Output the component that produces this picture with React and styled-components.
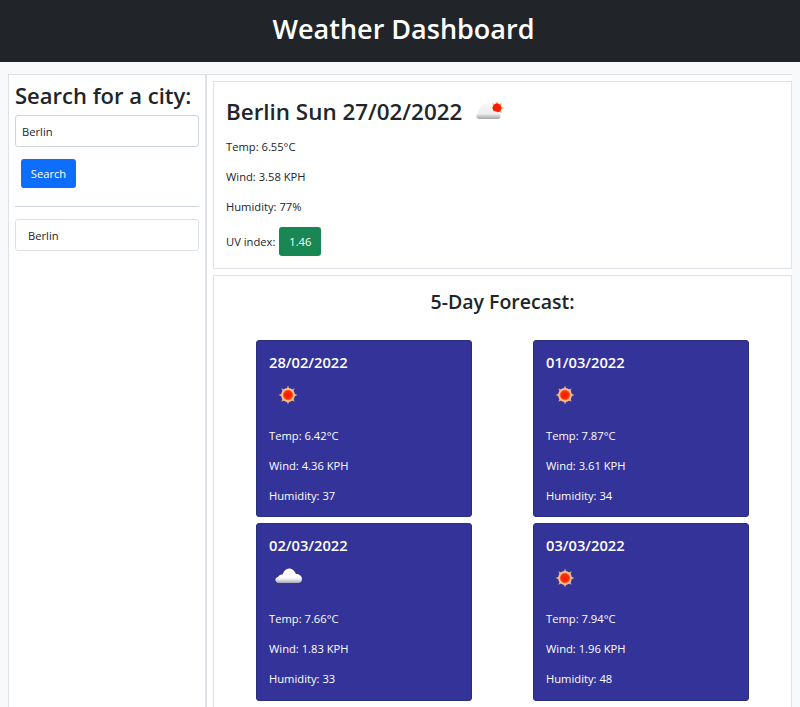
import styled, { createGlobalStyle } from "styled-components";

const GlobalStyle = createGlobalStyle`
  html, body {
    margin: 0;
    padding: 0;
    background: #fff;
    color: #212529;
    font-family: "Open Sans", "Noto Sans", sans-serif;
    font-size: 12px;
  }
  * { box-sizing: border-box; }
`;

const TopBar = styled.header`
  height: 62px;
  padding: 0 0 6px 7px;
  background: #212529;
  color: #fff;
  display: flex;
  align-items: center;
  justify-content: center;
`;

const PageTitle = styled.h1`
  margin: 0;
  font-size: 27px;
  font-weight: 600;
`;

const Layout = styled.div`
  background: #f8f9fa;
  padding: 12px 8px 0;
  display: grid;
  grid-template-columns: 198px 1fr;
  height: 645px;
  overflow: hidden;
`;

const Sidebar = styled.aside`
  background: #fff;
  border: 1px solid #dee2e6;
  border-bottom: 0;
  padding: 6px 6px;
`;

const SideTitle = styled.h2`
  margin: 0 0 6px;
  font-size: 22px;
  line-height: 28px;
  font-weight: 600;
  white-space: nowrap;
`;

const CityInput = styled.input`
  display: block;
  width: 100%;
  height: 32px;
  padding: 0 6px;
  border: 1px solid #ced4da;
  border-radius: 3px;
  color: #212529;
  font: inherit;
  font-size: 11.2px;
`;

const SearchButton = styled.button`
  display: block;
  margin: 12px 0 0 6px;
  width: 55px;
  height: 29px;
  padding: 0;
  border: 0;
  border-radius: 3px;
  background: #0d6efd;
  color: #fff;
  font: inherit;
  font-size: 11.2px;
`;

const Divider = styled.hr`
  margin: 18px 0 12px;
  border: 0;
  border-top: 1px solid #ced4da;
`;

const HistoryItem = styled.div`
  height: 32px;
  padding: 0 12px;
  display: flex;
  align-items: center;
  border: 1px solid #dee2e6;
  border-radius: 3px;
  font-size: 11.2px;
`;

const Main = styled.main`
  background: #fff;
  border: 1px solid #dee2e6;
  border-bottom: 0;
  border-right: 0;
  padding: 6px 0 0 6px;
  display: flex;
  flex-direction: column;
  gap: 6px;
`;

const Panel = styled.section`
  background: #fff;
  border: 1px solid #dee2e6;
  width: 579px;
`;

const TodayPanel = styled(Panel)`
  height: 188px;
  padding: 12px 12px 0;
`;

const CityRow = styled.div`
  display: flex;
  align-items: center;
  height: 34px;
  gap: 8px;
`;

const CityTitle = styled.h2`
  margin: 0;
  font-size: 22.4px;
  font-weight: 600;
  white-space: nowrap;
`;

const Stat = styled.p`
  margin: ${({ $first }) => ($first ? "10px" : "0")} 0 0;
  height: 30px;
  line-height: 18px;
  font-size: 11.2px;
`;

const UvRow = styled.div`
  display: flex;
  align-items: center;
  gap: 4px;
  font-size: 11.2px;
  margin-top: -1px;
`;

const UvBadge = styled.span`
  width: 42px;
  height: 29px;
  display: flex;
  align-items: center;
  justify-content: center;
  border-radius: 3px;
  background: #198754;
  color: #fff;
`;

const ForecastPanel = styled(Panel)`
  flex: 1;
  border-bottom: 0;
  padding-top: 12px;
`;

const ForecastTitle = styled.h3`
  margin: 0 0 24px;
  height: 28px;
  line-height: 28px;
  font-size: 19.5px;
  font-weight: 600;
  text-align: center;
`;

const ForecastGrid = styled.div`
  display: grid;
  grid-template-columns: 277px 277px;
  justify-content: center;
  row-gap: 6px;
`;

const DayCard = styled.article`
  justify-self: center;
  width: 216px;
  height: 177.4px;
  padding: 12px 12px 0;
  border: 1px solid #2a2f7d;
  border-radius: 3px;
  background: #333399;
  color: #fff;
`;

const DayDate = styled.h4`
  margin: 0;
  height: 20px;
  line-height: 18px;
  font-size: 14.7px;
  font-weight: 600;
`;

const IconSlot = styled.div`
  height: 40px;
  margin-top: 2px;
  display: flex;
  align-items: center;
`;

const DayStat = styled.p`
  margin: ${({ $first }) => ($first ? "12px" : "0")} 0 0;
  height: 30px;
  line-height: 18px;
  font-size: 11.2px;
`;

const Sun = () => {
  const rays = [0, 45, 90, 135, 180, 225, 270, 315];
  return (
    <svg width="40" height="40" viewBox="0 0 40 40">
      <defs>
        <radialGradient id="sunCore">
          <stop offset="0%" stopColor="#ff1c00" />
          <stop offset="70%" stopColor="#fb2a06" />
          <stop offset="100%" stopColor="#f8914a" />
        </radialGradient>
      </defs>
      {rays.map((r) => (
        <polygon key={r} points="17.6,14 20.4,14 19,10.5" fill="#e9a878" transform={`rotate(${r} 19 20)`} />
      ))}
      <circle cx="19" cy="20" r="6.9" fill="#f6c39c" />
      <circle cx="19" cy="20" r="5.4" fill="url(#sunCore)" />
    </svg>
  );
};

const Cloud = () => (
  <svg width="40" height="40" viewBox="0 0 40 40">
    <defs>
      <linearGradient id="cloudFill" x1="0" y1="0" x2="0" y2="1">
        <stop offset="0%" stopColor="#ffffff" />
        <stop offset="65%" stopColor="#ffffff" />
        <stop offset="100%" stopColor="#a9a9b8" />
      </linearGradient>
    </defs>
    <path
      d="M10 25 C6 25 5 20 9 19 C10 17 12 16.5 13.5 16.5 C15 12 18 10 21 10.5 C24 11 26 13.5 27 16 C30 16 33 18 33 21 C33 24 31 25 29 25 Z"
      fill="url(#cloudFill)"
    />
  </svg>
);

const CloudSun = () => (
  <svg width="40" height="40" viewBox="0 0 40 40">
    <defs>
      <linearGradient id="fewFill" x1="0" y1="0" x2="0" y2="1">
        <stop offset="0%" stopColor="#f6f6f6" />
        <stop offset="65%" stopColor="#efefef" />
        <stop offset="100%" stopColor="#a5a5a5" />
      </linearGradient>
    </defs>
    {[0, 45, 90, 135, 180, 225, 270, 315].map((r) => (
      <polygon key={r} points="25.6,13.5 28.4,13.5 27,10" fill="#f7a15c" transform={`rotate(${r} 27 17)`} />
    ))}
    <circle cx="27" cy="17" r="4.4" fill="#f61f00" />
    <path
      d="M9.5 28 C6 28 5 24 8 22.5 C9 17 12.5 12.5 16.5 12.5 C20 12.5 22 16 23.5 20 C26 20 28 21 29 22.5 C31.5 23.5 31 28 28 28 Z"
      fill="url(#fewFill)"
    />
  </svg>
);

const today = ["Temp: 6.55°C", "Wind: 3.58 KPH", "Humidity: 77%"];

const days = [
  { date: "28/02/2022", icon: "sun", temp: "6.42", wind: "4.36", hum: 37 },
  { date: "01/03/2022", icon: "sun", temp: "7.87", wind: "3.61", hum: 34 },
  { date: "02/03/2022", icon: "cloud", temp: "7.66", wind: "1.83", hum: 33 },
  { date: "03/03/2022", icon: "sun", temp: "7.94", wind: "1.96", hum: 48 },
];

export default function App() {
  return (
    <>
      <GlobalStyle />
      <TopBar>
        <PageTitle>Weather Dashboard</PageTitle>
      </TopBar>
      <Layout>
        <Sidebar>
          <SideTitle>Search for a city:</SideTitle>
          <CityInput defaultValue="Berlin" />
          <SearchButton>Search</SearchButton>
          <Divider />
          <HistoryItem>Berlin</HistoryItem>
        </Sidebar>
        <Main>
          <TodayPanel>
            <CityRow>
              <CityTitle>Berlin Sun 27/02/2022</CityTitle>
              <CloudSun />
            </CityRow>
            {today.map((t, i) => (
              <Stat key={t} $first={i === 0}>{t}</Stat>
            ))}
            <UvRow>
              UV index: <UvBadge>1.46</UvBadge>
            </UvRow>
          </TodayPanel>
          <ForecastPanel>
            <ForecastTitle>5-Day Forecast:</ForecastTitle>
            <ForecastGrid>
              {days.map((d) => (
                <DayCard key={d.date}>
                  <DayDate>{d.date}</DayDate>
                  <IconSlot>{d.icon === "sun" ? <Sun /> : <Cloud />}</IconSlot>
                  <DayStat $first>Temp: {d.temp}°C</DayStat>
                  <DayStat>Wind: {d.wind} KPH</DayStat>
                  <DayStat>Humidity: {d.hum}</DayStat>
                </DayCard>
              ))}
            </ForecastGrid>
          </ForecastPanel>
        </Main>
      </Layout>
    </>
  );
}
